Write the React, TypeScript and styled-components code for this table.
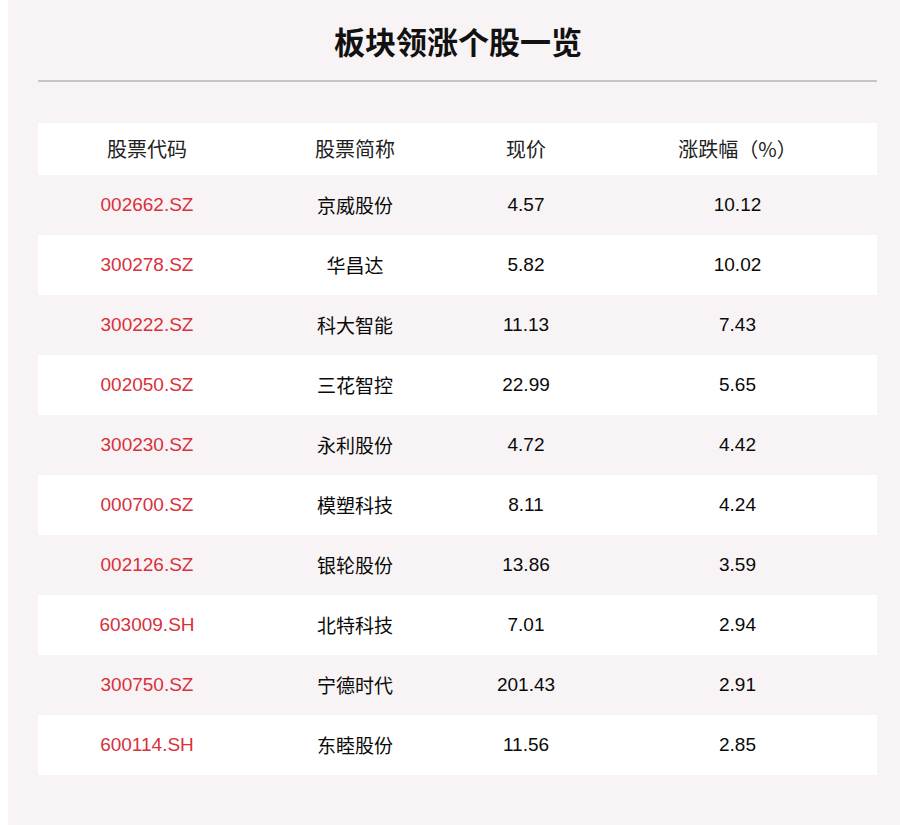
import React from 'react';
import styled, { createGlobalStyle } from 'styled-components';

const GlobalStyle = createGlobalStyle`
  html, body {
    margin: 0;
    padding: 0;
    background: #ffffff;
  }
  body {
    font-family: 'Liberation Sans', Arial, 'Noto Sans CJK SC', sans-serif;
  }
`;

const Panel = styled.div`
  margin-left: 8px;
  width: 892px;
  min-height: 825px;
  background-color: #f8f4f5;
  padding: 0 23px 0 30px;
  box-sizing: border-box;
`;

const Title = styled.h1`
  margin: 0;
  height: 80px;
  display: flex;
  align-items: center;
  justify-content: center;
  font-size: 31px;
  font-weight: bold;
  color: #111111;
  font-family: 'Noto Sans CJK SC', sans-serif;
  padding-left: 1px;
`;

const Divider = styled.hr`
  border: none;
  border-top: 2px solid #c6c6c6;
  margin: 0 0 41px 0;
`;

const Table = styled.div`
  width: 839px;
  display: flex;
  flex-direction: column;
`;

const Row = styled.div<{ $tone: 'white' | 'pink' | 'head' }>`
  display: grid;
  grid-template-columns: 218px 198px 144px 1fr;
  align-items: center;
  height: ${(p) => (p.$tone === 'head' ? '52px' : '60px')};
  background-color: ${(p) => (p.$tone === 'pink' ? '#f8f4f5' : '#ffffff')};
`;

const HeadCell = styled.div`
  text-align: center;
  font-size: 20px;
  line-height: 1;
  color: #222222;
  font-family: 'Noto Sans CJK SC', sans-serif;
  padding-bottom: 1px;
`;

const Cell = styled.div<{ $red?: boolean; $cjk?: boolean }>`
  text-align: center;
  font-size: 19px;
  line-height: 1;
  padding-bottom: 2px;
  color: ${(p) => (p.$red ? '#d9303b' : '#0a0a0a')};
  font-family: ${(p) =>
    p.$cjk
      ? "'Noto Sans CJK SC', sans-serif"
      : "'Liberation Sans', Arial, sans-serif"};
`;

const stocks = [
  { code: '002662.SZ', name: '京威股份', price: '4.57', pct: '10.12' },
  { code: '300278.SZ', name: '华昌达', price: '5.82', pct: '10.02' },
  { code: '300222.SZ', name: '科大智能', price: '11.13', pct: '7.43' },
  { code: '002050.SZ', name: '三花智控', price: '22.99', pct: '5.65' },
  { code: '300230.SZ', name: '永利股份', price: '4.72', pct: '4.42' },
  { code: '000700.SZ', name: '模塑科技', price: '8.11', pct: '4.24' },
  { code: '002126.SZ', name: '银轮股份', price: '13.86', pct: '3.59' },
  { code: '603009.SH', name: '北特科技', price: '7.01', pct: '2.94' },
  { code: '300750.SZ', name: '宁德时代', price: '201.43', pct: '2.91' },
  { code: '600114.SH', name: '东睦股份', price: '11.56', pct: '2.85' },
];

const App = () => {
  return (
    <>
      <GlobalStyle />
      <Panel>
        <Title>板块领涨个股一览</Title>
        <Divider />
        <Table>
          <Row $tone="head">
            <HeadCell>股票代码</HeadCell>
            <HeadCell>股票简称</HeadCell>
            <HeadCell>现价</HeadCell>
            <HeadCell>涨跌幅（%）</HeadCell>
          </Row>
          {stocks.map((s, i) => (
            <Row key={s.code} $tone={i % 2 === 0 ? 'pink' : 'white'}>
              <Cell $red>{s.code}</Cell>
              <Cell $cjk>{s.name}</Cell>
              <Cell>{s.price}</Cell>
              <Cell>{s.pct}</Cell>
            </Row>
          ))}
        </Table>
      </Panel>
    </>
  );
};

export default App;
